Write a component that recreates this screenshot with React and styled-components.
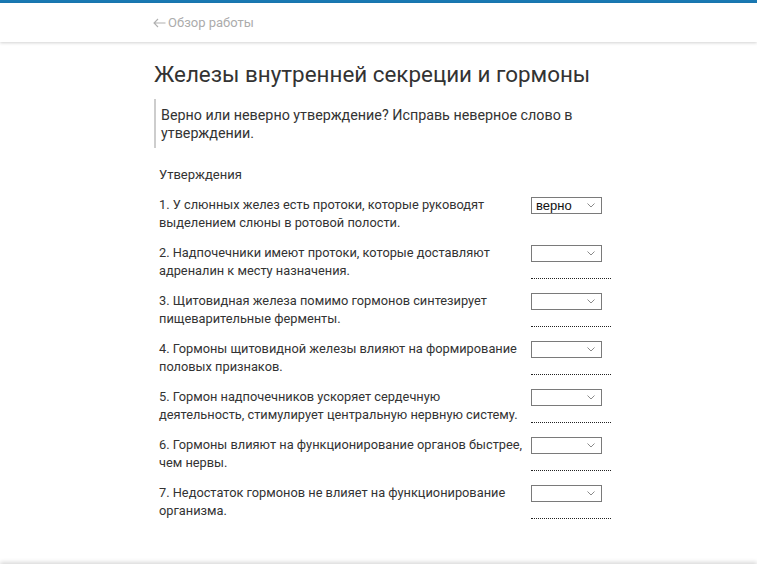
import React from 'react';
import styled, { createGlobalStyle } from 'styled-components';

const statements = [
  { id: 1, text: 'У слюнных желез есть протоки, которые руководят выделением слюны в ротовой полости.', value: 'верно', correction: false },
  { id: 2, text: 'Надпочечники имеют протоки, которые доставляют адреналин к месту назначения.', value: '', correction: true },
  { id: 3, text: 'Щитовидная железа помимо гормонов синтезирует пищеварительные ферменты.', value: '', correction: true },
  { id: 4, text: 'Гормоны щитовидной железы влияют на формирование половых признаков.', value: '', correction: true },
  { id: 5, text: 'Гормон надпочечников ускоряет сердечную деятельность, стимулирует центральную нервную систему.', value: '', correction: true },
  { id: 6, text: 'Гормоны влияют на функционирование органов быстрее, чем нервы.', value: '', correction: true },
  { id: 7, text: 'Недостаток гормонов не влияет на функционирование организма.', value: '', correction: true },
];

export default function App() {
  return (
    <Page>
      <GlobalStyle />
      <TopBar />
      <Header>
        <BackLink>
          <svg width="13" height="10" viewBox="0 0 13 10">
            <path d="M12.5 5 H1 M5 1 L1 5 L5 9" fill="none" stroke="#b0b0b0" strokeWidth="1.1" />
          </svg>
          <span>Обзор работы</span>
        </BackLink>
      </Header>
      <Main>
        <Title>Железы внутренней секреции и гормоны</Title>
        <Quote>Верно или неверно утверждение? Исправь неверное слово в утверждении.</Quote>
        <Caption>Утверждения</Caption>
        <List>
          {statements.map((s) => (
            <Row key={s.id}>
              <Statement>{`${s.id}. ${s.text}`}</Statement>
              <Answer>
                <Select>
                  <span>{s.value}</span>
                  <svg width="8" height="5" viewBox="0 0 8 5">
                    <path d="M0.5 0.5 L4 4 L7.5 0.5" fill="none" stroke="#8a8a8a" strokeWidth="1" />
                  </svg>
                </Select>
                {s.correction && <Correction />}
              </Answer>
            </Row>
          ))}
        </List>
      </Main>
      <Footer />
    </Page>
  );
}

const GlobalStyle = createGlobalStyle`
  body {
    margin: 0;
    background: #fff;
    font-family: Roboto, 'Noto Sans', sans-serif;
    color: #333;
  }
`;

const Page = styled.div`
  display: flex;
  flex-direction: column;
  min-height: 100vh;
`;

const TopBar = styled.div`
  height: 3px;
  background: #1a79b3;
`;

const Header = styled.div`
  height: 39px;
  display: flex;
  align-items: center;
  padding-left: 153px;
  background: #fff;
  box-shadow: 0 1px 3px rgba(0, 0, 0, 0.18);
  position: relative;
  z-index: 1;
`;

const BackLink = styled.div`
  font-size: 13px;
  color: #acacac;
  display: flex;
  align-items: center;
  gap: 2px;
`;

const Main = styled.div`
  flex: 1;
  padding: 19px 0 0 154px;
`;

const Title = styled.h1`
  margin: 0;
  font-size: 22.4px;
  line-height: 26px;
  font-weight: 400;
  color: #333;
`;

const Quote = styled.div`
  margin-top: 12px;
  width: 430px;
  border-left: 2px solid #cdcdcd;
  padding: 7px 0 6px 5px;
  font-size: 14.3px;
  line-height: 18px;
  color: #333;
`;

const Caption = styled.div`
  margin-top: 18px;
  padding-left: 5px;
  font-size: 13px;
  line-height: 18px;
`;

const List = styled.div`
  margin-top: 12px;
  padding-left: 5px;
  display: flex;
  flex-direction: column;
  gap: 12px;
`;

const Row = styled.div`
  display: flex;
  align-items: flex-start;
  gap: 4px;
`;

const Statement = styled.div`
  width: 368px;
  font-size: 12.8px;
  line-height: 18px;
  height: 36px;
  color: #333;
`;

const Answer = styled.div`
  padding-top: 1px;
  display: flex;
  flex-direction: column;
`;

const Select = styled.div`
  box-sizing: border-box;
  width: 71px;
  height: 17px;
  border: 1px solid #7a7a7a;
  display: flex;
  align-items: center;
  justify-content: space-between;
  padding: 0 6px 0 4px;
  font-family: 'Liberation Sans', Arial, sans-serif;
  font-size: 13px;
  color: #111;
`;

const Correction = styled.div`
  margin-top: 16px;
  width: 80px;
  border-bottom: 1px dotted #222;
`;

const Footer = styled.div`
  height: 10px;
  background: #fff;
  box-shadow: 0 -2px 4px rgba(0, 0, 0, 0.15);
`;
